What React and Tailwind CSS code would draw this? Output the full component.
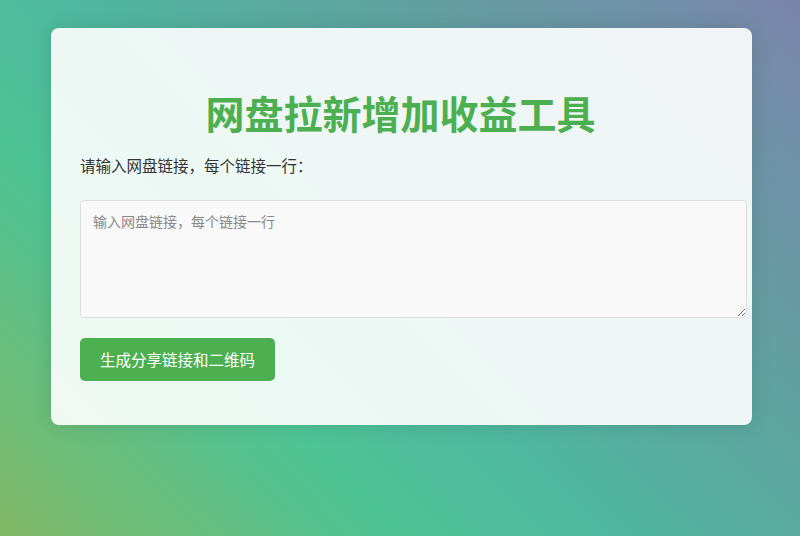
const App = () => {
  return (
    <div
      className="min-h-screen w-full bg-[linear-gradient(45deg,#80b865_0%,#4dc496_30%,#4fb89e_45%,#5aa89f_62%,#7a85ab_100%)] pt-[28px] pb-10"
      style={{ fontFamily: '"Noto Sans CJK SC", "Noto Sans", sans-serif' }}
    >
      <div className="ml-[51px] w-[701px] rounded-lg bg-white/90 pl-[29px] pr-[31px] pt-[60px] pb-[44px] shadow-[0_0_20px_rgba(0,0,0,0.12)]">
        {/* title */}
        <h1 className="text-center text-[39px] leading-[48px] font-bold text-[#4caf50]">
          网盘拉新增加收益工具
        </h1>

        <label className="mt-[17px] block text-[15.5px] leading-[24px] text-[#333]">
          请输入网盘链接，每个链接一行：
        </label>

        <textarea
          placeholder="输入网盘链接，每个链接一行"
          className="mt-[23px] block box-content w-full h-[92px] p-3 rounded border border-[#ddd] bg-[#f9f9f9] text-[14px] leading-[16px] text-[#333] placeholder:text-[#888] outline-none"
        ></textarea>

        <button className="mt-5 block rounded-[5px] bg-[#4caf50] px-5 py-3 text-[15.5px] leading-[19px] text-white hover:bg-[#45a049]">
          生成分享链接和二维码
        </button>
      </div>
    </div>
  );
};

export default App;
